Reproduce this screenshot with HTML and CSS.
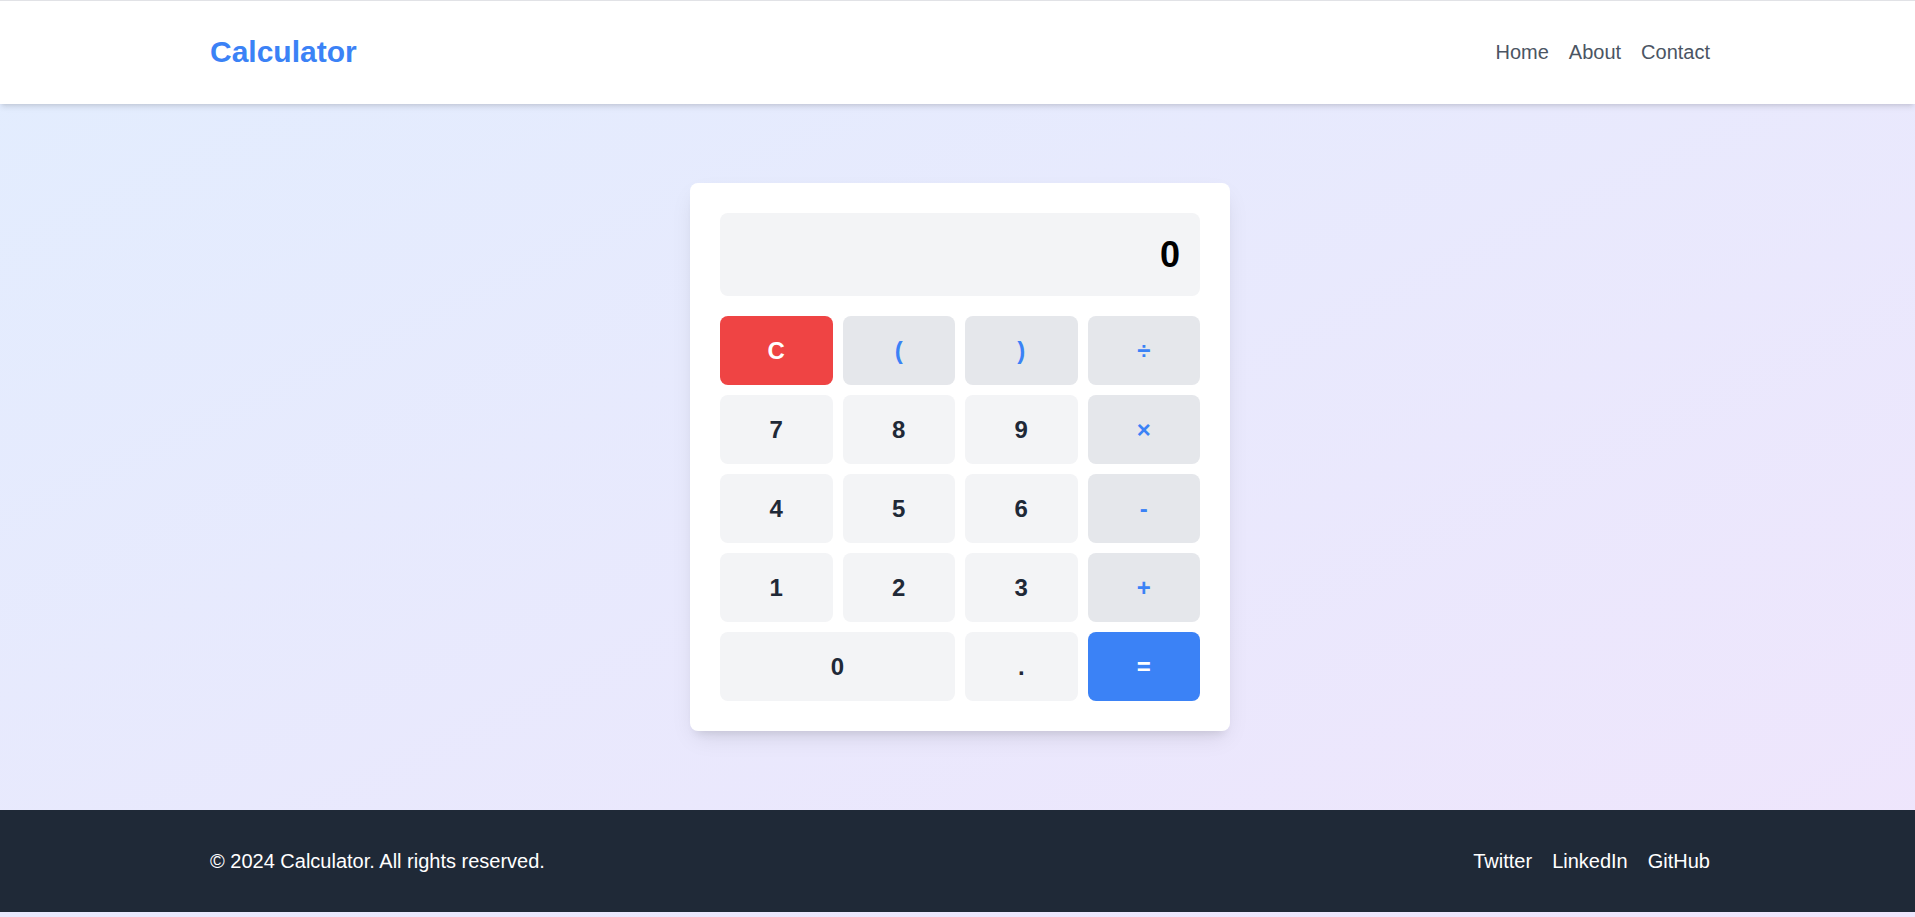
FILE: index.html
```html
<!DOCTYPE html>
<html lang="en">
<head>
<meta charset="UTF-8">
<title>Calculator</title>
<link rel="stylesheet" href="styles.css">
</head>
<body>
  <header class="site-header">
    <div class="container header-inner">
      <a class="logo" href="#">Calculator</a>
      <nav class="nav">
        <a href="#">Home</a>
        <a href="#">About</a>
        <a href="#">Contact</a>
      </nav>
    </div>
  </header>

  <main class="main">
    <div class="calculator">
      <div class="display">0</div>
      <div class="keys">
        <button class="key key-clear">C</button>
        <button class="key key-op">(</button>
        <button class="key key-op">)</button>
        <button class="key key-op">÷</button>

        <button class="key">7</button>
        <button class="key">8</button>
        <button class="key">9</button>
        <button class="key key-op">×</button>

        <button class="key">4</button>
        <button class="key">5</button>
        <button class="key">6</button>
        <button class="key key-op">-</button>

        <button class="key">1</button>
        <button class="key">2</button>
        <button class="key">3</button>
        <button class="key key-op">+</button>

        <button class="key key-wide">0</button>
        <button class="key">.</button>
        <button class="key key-equals">=</button>
      </div>
    </div>
  </main>

  <footer class="site-footer">
    <div class="container footer-inner">
      <p class="copyright">© 2024 Calculator. All rights reserved.</p>
      <nav class="footer-links">
        <a href="#">Twitter</a>
        <a href="#">LinkedIn</a>
        <a href="#">GitHub</a>
      </nav>
    </div>
  </footer>
</body>
</html>
```

FILE: styles.css
```css
* {
  box-sizing: border-box;
}

html, body {
  margin: 0;
  padding: 0;
}

body {
  min-height: 100vh;
  display: flex;
  flex-direction: column;
  font-family: "Liberation Sans", Arial, sans-serif;
  background: linear-gradient(to bottom right, #e2edfe, #efe5fc);
  padding-bottom: 5px;
}

a {
  text-decoration: none;
}

.container {
  width: 1500px;
  margin: 0 auto;
  padding-left: 5px;
  box-sizing: content-box;
}

.site-header {
  background: #ffffff;
  border-top: 1px solid #e1e2e6;
  box-shadow: 0 4px 6px -1px rgba(0, 0, 0, 0.1), 0 2px 4px -2px rgba(0, 0, 0, 0.1);
  position: relative;
  z-index: 1;
}

.header-inner {
  height: 103px;
  padding-bottom: 2px;
  box-sizing: border-box;
  width: 1505px;
  display: flex;
  align-items: center;
  justify-content: space-between;
}

.logo {
  font-size: 30px;
  line-height: 36px;
  font-weight: 700;
  color: #3b82f6;
}

.nav {
  display: flex;
  gap: 20px;
}

.nav a {
  font-size: 20px;
  line-height: 28px;
  color: #4b5563;
}

.main {
  flex: 1;
  display: flex;
  align-items: center;
  justify-content: center;
  padding-left: 5px;
}

.calculator {
  width: 540px;
  background: #ffffff;
  border-radius: 8px;
  padding: 30px;
  box-shadow: 0 10px 25px -5px rgba(0, 0, 0, 0.1), 0 8px 10px -6px rgba(0, 0, 0, 0.1);
}

.display {
  background: #f3f4f6;
  border-radius: 8px;
  height: 83px;
  padding: 0 20px;
  display: flex;
  align-items: center;
  justify-content: flex-end;
  font-size: 36px;
  font-weight: 700;
  color: #000000;
  margin-bottom: 20px;
}

.keys {
  display: grid;
  grid-template-columns: repeat(4, 1fr);
  grid-auto-rows: 69px;
  gap: 10px;
}

.key {
  border: none;
  border-radius: 8px;
  background: #f3f4f6;
  color: #1f2937;
  font-family: "Liberation Sans", Arial, sans-serif;
  font-size: 24px;
  font-weight: 700;
  padding: 0;
  cursor: pointer;
}

.key-op {
  background: #e5e7eb;
  color: #3b82f6;
}

.key-clear {
  background: #ef4444;
  color: #ffffff;
}

.key-equals {
  background: #3b82f6;
  color: #ffffff;
}

.key-wide {
  grid-column: span 2;
}

.site-footer {
  background: #1f2937;
  color: #ffffff;
}

.footer-inner {
  height: 102px;
  display: flex;
  align-items: center;
  justify-content: space-between;
}

.copyright {
  margin: 0;
  font-size: 20px;
}

.footer-links {
  display: flex;
  gap: 20px;
}

.footer-links a {
  font-size: 20px;
  color: #ffffff;
}
```
